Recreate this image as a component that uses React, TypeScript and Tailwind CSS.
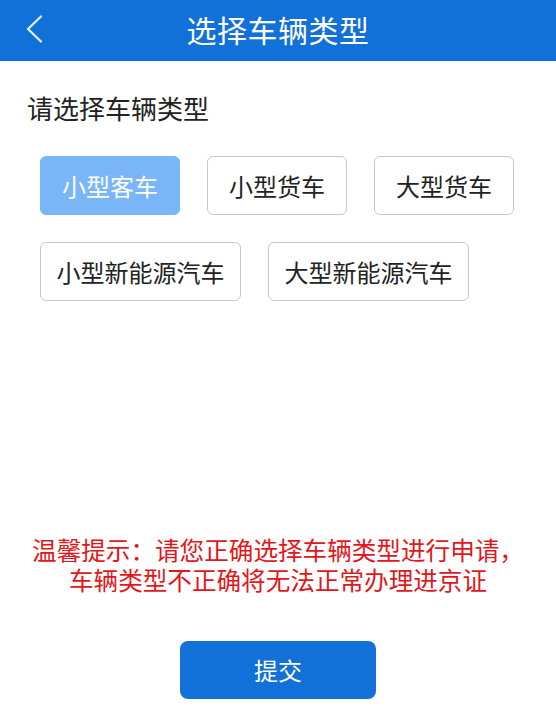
import { useState } from 'react'

const types = ['小型客车', '小型货车', '大型货车', '小型新能源汽车', '大型新能源汽车']

export default function App() {
    const [selected, setSelected] = useState(0)

    return (
        <div
            className="min-h-[707px] bg-white flex flex-col text-[#222]"
            style={{ fontFamily: '"Noto Sans CJK SC", "Noto Sans", sans-serif' }}
        >
            {/* Header */}
            <div className="relative h-[61px] bg-[#1271d8] flex items-center justify-center">
                <button className="absolute left-[22px] top-[12px] w-[26px] h-[34px] flex items-center justify-center">
                    <svg width="18" height="28" viewBox="0 0 18 28" fill="none">
                        <polyline points="15,1.5 2,14 15,26.5" stroke="#e6f1ff" strokeWidth="2.2" strokeLinecap="round" strokeLinejoin="round" />
                    </svg>
                </button>
                <h1 className="text-[30px] leading-none text-white tracking-[0.5px] -mt-[3px]">选择车辆类型</h1>
            </div>

            <p className="mt-[29px] px-[27px] text-[26px] leading-[36px]">请选择车辆类型</p>

            <div className="mt-[30px] pl-[40px] pr-[20px] flex flex-wrap gap-x-[27px] gap-y-[27px]">
                {types.map((t, i) => (
                    <button
                        key={t}
                        onClick={() => setSelected(i)}
                        className={`h-[59px] rounded-[6px] text-[24px] leading-none flex items-center justify-center ${
                            t.length > 4 ? 'w-[201px]' : 'w-[140px]'
                        } ${
                            selected === i
                                ? 'bg-[#7ab5f7] text-white border border-[#7ab5f7]'
                                : 'bg-white border border-[#c8c8c8] text-[#222]'
                        }`}
                    >
                        {t}
                    </button>
                ))}
            </div>

            <div className="mt-[233px] text-center text-[24.6px] leading-[30px] text-[#e3161b]">
                <p>温馨提示：请您正确选择车辆类型进行申请，</p>
                <p>车辆类型不正确将无法正常办理进京证</p>
            </div>

            <div className="mt-[47px] flex justify-center">
                <button className="w-[196px] h-[58px] rounded-[8px] bg-[#1271d8] text-white text-[24px] leading-none flex items-center justify-center">
                    提交
                </button>
            </div>
        </div>
    )
}
